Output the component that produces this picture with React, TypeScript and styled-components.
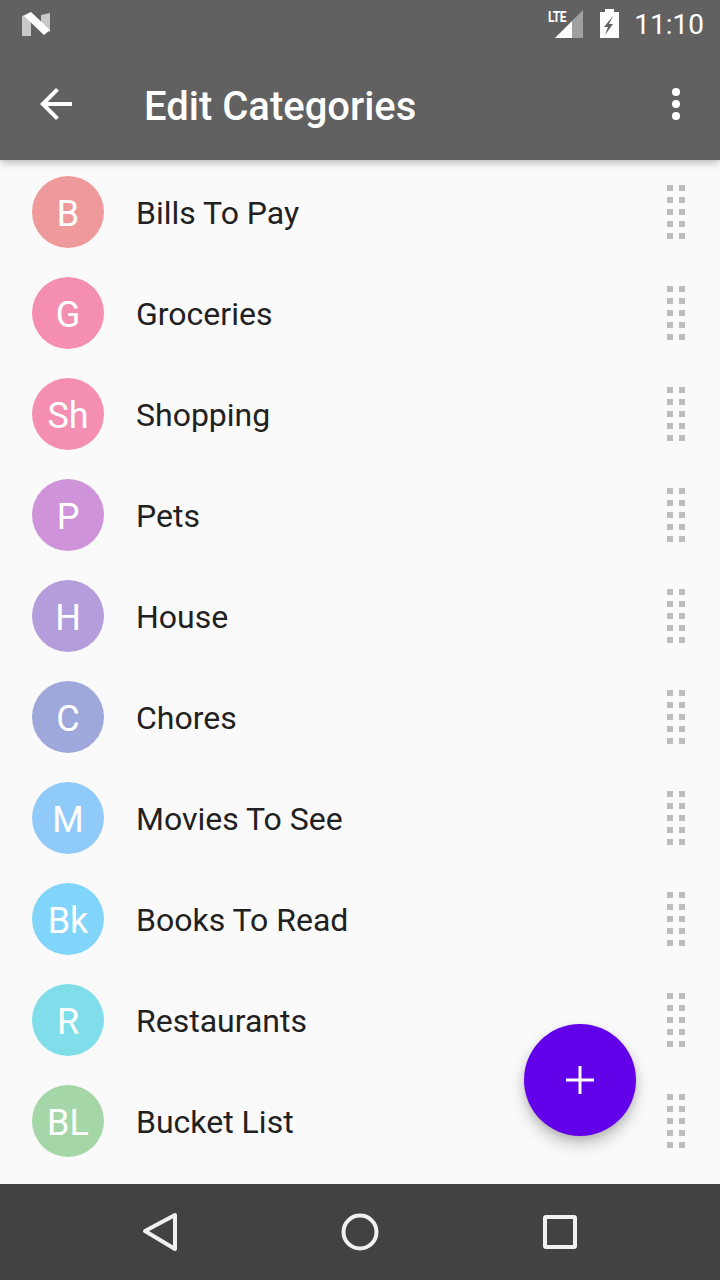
import styled, { createGlobalStyle } from "styled-components";

const GlobalStyle = createGlobalStyle`
  html, body {
    margin: 0;
    padding: 0;
    background: #fafafa;
    font-family: Roboto, "Liberation Sans", sans-serif;
  }
`;

const Screen = styled.div`
  position: relative;
  width: 720px;
  height: 1280px;
  display: flex;
  flex-direction: column;
  overflow: hidden;
  background: #fafafa;
`;

const Header = styled.header`
  position: relative;
  z-index: 2;
  background: #616161;
  box-shadow: 0 2px 8px rgba(0, 0, 0, 0.3);
`;

const StatusBar = styled.div`
  height: 48px;
  display: flex;
  align-items: flex-start;
  padding: 0 16px 0 22px;
  box-sizing: border-box;
`;

const StatusLogo = styled.svg`
  width: 28px;
  height: 24px;
  margin-top: 12px;
`;

const StatusIcons = styled.div`
  margin-left: auto;
  display: flex;
  align-items: flex-start;
`;

const SignalWrap = styled.div`
  position: relative;
  width: 35px;
  height: 30px;
  margin-top: 9px;
`;

const LteLabel = styled.span`
  position: absolute;
  left: 0;
  top: 1px;
  font-size: 15px;
  line-height: 15px;
  font-weight: 700;
  color: #fff;
  letter-spacing: -0.5px;
  transform: scaleX(0.8);
  transform-origin: left top;
`;

const SignalIcon = styled.svg`
  position: absolute;
  left: 7px;
  top: 1px;
  width: 28px;
  height: 28px;
`;

const BatteryIcon = styled.svg`
  width: 19px;
  height: 29px;
  margin: 9px 0 0 17px;
`;

const Clock = styled.span`
  margin: 8px 0 0 15px;
  font-size: 28px;
  line-height: 33px;
  color: #fff;
`;

const Toolbar = styled.div`
  height: 112px;
  display: flex;
  align-items: center;
  padding: 0 40px 0 32px;
  box-sizing: border-box;
`;

const BackIcon = styled.svg`
  width: 48px;
  height: 48px;
  fill: #fff;
`;

const Title = styled.h1`
  margin: 5px 0 0 64px;
  font-size: 40px;
  line-height: 48px;
  font-weight: 500;
  color: #fff;
`;

const MoreIcon = styled.svg`
  margin-left: auto;
  width: 8px;
  height: 32px;
  fill: #fff;
`;

const List = styled.ul`
  flex: 1;
  list-style: none;
  margin: 0;
  padding: 16px 35px 0 32px;
  display: flex;
  flex-direction: column;
  gap: 29px;
`;

const Row = styled.li`
  height: 72px;
  display: flex;
  align-items: center;
`;

const Avatar = styled.div<{ $color: string }>`
  width: 72px;
  height: 72px;
  padding-top: 4px;
  box-sizing: border-box;
  border-radius: 50%;
  flex: none;
  display: flex;
  align-items: center;
  justify-content: center;
  background: ${(p) => p.$color};
  color: #fff;
  font-size: 36px;
`;

const Label = styled.span`
  margin-left: 32px;
  font-size: 32px;
  color: #212121;
  position: relative;
  top: 1px;
`;

const Handle = styled.div`
  margin-left: auto;
  display: grid;
  grid-template-columns: 6px 6px;
  grid-auto-rows: 6px;
  gap: 6px;
`;

const HandleDot = styled.span`
  background: #bdbdbd;
`;

const Fab = styled.button`
  position: absolute;
  left: 524px;
  top: 1024px;
  width: 112px;
  height: 112px;
  padding: 0;
  border: none;
  border-radius: 50%;
  background: #6200ea;
  box-shadow: 0 8px 16px rgba(0, 0, 0, 0.22), 0 3px 6px rgba(0, 0, 0, 0.1);
  display: flex;
  align-items: center;
  justify-content: center;
`;

const PlusIcon = styled.svg`
  width: 28px;
  height: 28px;
  fill: #fff;
`;

const NavBar = styled.nav`
  height: 96px;
  flex: none;
  background: #424242;
  display: flex;
  justify-content: center;
`;

const NavButton = styled.div`
  width: 200px;
  display: flex;
  align-items: center;
  justify-content: center;
`;

const NavIcon = styled.svg`
  width: 48px;
  height: 48px;
  fill: none;
  stroke: #f0f0f0;
  stroke-width: 4;
  stroke-linejoin: round;
`;

const categories = [
  { initials: "B", name: "Bills To Pay", color: "#ef9a9a" },
  { initials: "G", name: "Groceries", color: "#f48fb1" },
  { initials: "Sh", name: "Shopping", color: "#f48fb1" },
  { initials: "P", name: "Pets", color: "#ce93d8" },
  { initials: "H", name: "House", color: "#b39ddb" },
  { initials: "C", name: "Chores", color: "#9fa8da" },
  { initials: "M", name: "Movies To See", color: "#90caf9" },
  { initials: "Bk", name: "Books To Read", color: "#81d4fa" },
  { initials: "R", name: "Restaurants", color: "#80deea" },
  { initials: "BL", name: "Bucket List", color: "#a5d6a7" },
];

const App = () => {
  return (
    <Screen>
      <GlobalStyle />
      <Header>
        <StatusBar>
          <StatusLogo viewBox="0 0 28 24">
            <path d="M0 4 L9 0 V24 L0 24 Z" fill="#c8c8c8" />
            <path d="M28 1 V20 L19 15 V3 Z" fill="#c8c8c8" />
            <path d="M2 4 L9 0 L28 18 L22 23 Z" fill="#fff" />
          </StatusLogo>
          <StatusIcons>
            <SignalWrap>
              <LteLabel>LTE</LteLabel>
              <SignalIcon viewBox="0 0 28 28">
                <path d="M28 0 V28 H17 V11 Z" fill="#a0a0a0" />
                <path d="M0 28 L17 11 V28 Z" fill="#fff" />
              </SignalIcon>
            </SignalWrap>
            <BatteryIcon viewBox="0 0 19 29">
              <path
                d="M5 0 H14 V3 H19 V29 H0 V3 H5 Z M13 7 L4 18 H8 L5 26 L13 15 H9 Z"
                fill="#fff"
                fillRule="evenodd"
              />
            </BatteryIcon>
            <Clock>11:10</Clock>
          </StatusIcons>
        </StatusBar>
        <Toolbar>
          <BackIcon viewBox="0 0 24 24">
            <path d="M20 11H7.830l5.590-5.590L12 4l-8 8 8 8 1.410-1.410L7.830 13H20v-2z" />
          </BackIcon>
          <Title>Edit Categories</Title>
          <MoreIcon viewBox="0 0 8 32">
            <circle cx="4" cy="4" r="4" />
            <circle cx="4" cy="16" r="4" />
            <circle cx="4" cy="28" r="4" />
          </MoreIcon>
        </Toolbar>
      </Header>
      <List>
        {categories.map((category) => (
          <Row key={category.name}>
            <Avatar $color={category.color}>{category.initials}</Avatar>
            <Label>{category.name}</Label>
            <Handle>
              {Array.from({ length: 10 }, (_, i) => (
                <HandleDot key={i} />
              ))}
            </Handle>
          </Row>
        ))}
      </List>
      <Fab aria-label="Add category">
        <PlusIcon viewBox="0 0 28 28">
          <path d="M12.500 0h3v12.500H28v3H15.500V28h-3V15.500H0v-3h12.500z" />
        </PlusIcon>
      </Fab>
      <NavBar>
        <NavButton>
          <NavIcon viewBox="0 0 48 48">
            <path d="M39 8 L9 24 L39 42 Z" transform="translate(0 -1)" />
          </NavIcon>
        </NavButton>
        <NavButton>
          <NavIcon viewBox="0 0 48 48">
            <circle cx="24" cy="24" r="16.500" />
          </NavIcon>
        </NavButton>
        <NavButton>
          <NavIcon viewBox="0 0 48 48">
            <rect x="9" y="9" width="30" height="30" rx="1" />
          </NavIcon>
        </NavButton>
      </NavBar>
    </Screen>
  );
};

export default App;
